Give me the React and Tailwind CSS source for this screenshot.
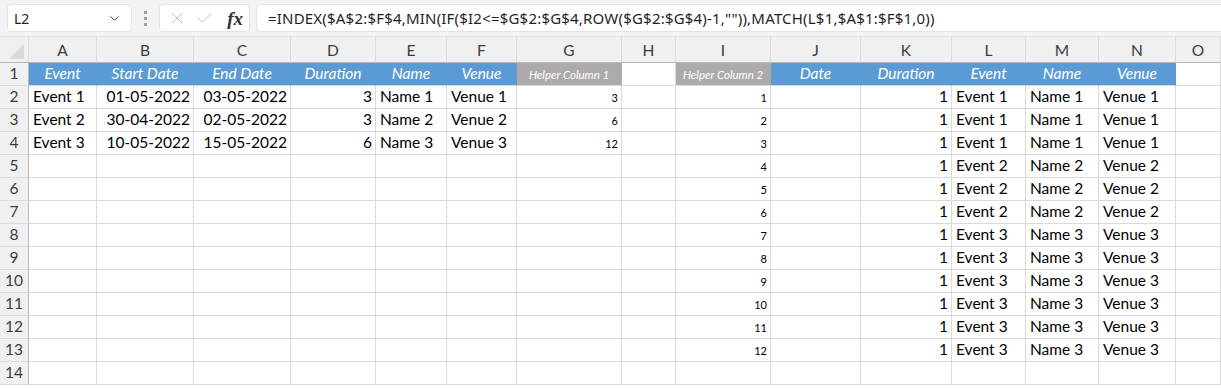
import { ChevronDown, X, Check } from "lucide-react";

const COLS = ["A", "B", "C", "D", "E", "F", "G", "H", "I", "J", "K", "L", "M", "N", "O"];
const GRID = "grid grid-cols-[29px_68px_97px_97px_85px_71px_70px_105px_54px_95px_90px_91px_74px_73px_77px_1fr]";

const events = [
  ["Event 1", "01-05-2022", "03-05-2022", "3", "Name 1", "Venue 1", "3"],
  ["Event 2", "30-04-2022", "02-05-2022", "3", "Name 2", "Venue 2", "6"],
  ["Event 3", "10-05-2022", "15-05-2022", "6", "Name 3", "Venue 3", "12"],
];

// helper column 2 -> expanded rows
const expanded = [1, 2, 3, 4, 5, 6, 7, 8, 9, 10, 11, 12].map((n) => {
  const e = n <= 3 ? 0 : n <= 6 ? 1 : 2;
  return [String(n), "", "1", events[e][0], events[e][4], events[e][5]];
});

function Cell({ children, align = "left", small, className = "" }) {
  return (
    <div
      className={
        "h-[23px] border-r border-b border-[#dadada] flex items-center overflow-hidden whitespace-nowrap " +
        (align === "right" ? "justify-end pr-[3px] " : "pl-[4px] ") +
        (small ? "text-[11px] pt-[3px] " : "text-[15.5px] ") +
        className
      }
    >
      {children}
    </div>
  );
}

function HeadCell({ children, gray, small }) {
  return (
    <div
      className={
        "h-[23px] border-b border-[#dadada] flex items-center justify-center italic text-white whitespace-nowrap " +
        (gray ? "bg-[#aeaaaa] border-r border-r-[#aeaaaa] " : "bg-[#5b9bd5] border-r border-r-[#5b9bd5] ") +
        (small ? "text-[11.5px] pt-[2px]" : "text-[15.5px]")
      }
    >
      {children}
    </div>
  );
}

function RowNum({ n }) {
  return (
    <div className="h-[23px] bg-[#f0f0f0] border-r border-r-[#b8b8b8] border-b border-[#dcdcdc] flex items-center justify-center text-[15.5px] text-[#3c3c3c]">
      {n}
    </div>
  );
}

export default function App() {
  const rows = [];
  for (let r = 2; r <= 14; r++) {
    const ev = events[r - 2];
    const ex = expanded[r - 2];
    rows.push(
      <div key={r} className={GRID}>
        <RowNum n={r} />
        <Cell>{ev ? ev[0] : ""}</Cell>
        <Cell align="right">{ev ? ev[1] : ""}</Cell>
        <Cell align="right">{ev ? ev[2] : ""}</Cell>
        <Cell align="right">{ev ? ev[3] : ""}</Cell>
        <Cell>{ev ? ev[4] : ""}</Cell>
        <Cell>{ev ? ev[5] : ""}</Cell>
        <Cell align="right" small>{ev ? ev[6] : ""}</Cell>
        <Cell />
        <Cell align="right" small>{ex ? ex[0] : ""}</Cell>
        <Cell />
        <Cell align="right">{ex ? ex[2] : ""}</Cell>
        <Cell>{ex ? ex[3] : ""}</Cell>
        <Cell>{ex ? ex[4] : ""}</Cell>
        <Cell>{ex ? ex[5] : ""}</Cell>
        <Cell />
      </div>
    );
  }

  return (
    <div className="w-[1221px] h-[388px] overflow-hidden bg-white font-['Lato',sans-serif] text-black">
      {/* formula bar */}
      <div className="h-[37px] bg-[#f3f3f3] border-b border-[#e2e2e2] flex items-start pt-[4px] pl-[7px] font-['Noto_Sans',sans-serif]">
        <div className="w-[125px] h-[28px] bg-white rounded-[4px] border border-[#e3e3e3] flex items-center justify-between pl-[6px] pr-[9px] text-[14px] text-[#1f1f1f]">
          <span>L2</span>
          <ChevronDown size={15} strokeWidth={1.6} className="text-[#444]" />
        </div>
        <div className="w-[27px] h-[28px] flex flex-col items-center justify-center gap-[3px]">
          <span className="w-[3px] h-[3px] bg-[#a0a0a0]" />
          <span className="w-[3px] h-[3px] bg-[#a0a0a0]" />
          <span className="w-[3px] h-[3px] bg-[#a0a0a0]" />
        </div>
        <div className="w-[91px] h-[28px] bg-white rounded-[4px] border border-[#e3e3e3] flex items-center pl-[7px] pr-[6px]">
          <X size={20} strokeWidth={1} className="text-[#b8b8b8]" />
          <Check size={20} strokeWidth={1} className="text-[#b8b8b8] ml-[8px]" />
          <span className="ml-auto italic text-[19px] font-['Liberation_Serif',serif] font-bold text-[#333] leading-none">fx</span>
        </div>
        <div className="ml-[6px] flex-1 h-[28px] bg-white rounded-l-[4px] border border-r-0 border-[#e3e3e3] flex items-center pl-[11px] text-[15px] tracking-[0.2px] text-[#1f1f1f] whitespace-nowrap">
          =INDEX($A$2:$F$4,MIN(IF($I2&lt;=$G$2:$G$4,ROW($G$2:$G$4)-1,"")),MATCH(L$1,$A$1:$F$1,0))
        </div>
      </div>

      {/* column letters */}
      <div className={GRID + " bg-[#f0f0f0]"}>
        <div className="h-[26px] border-r border-[#dcdcdc] border-b border-b-[#b8b8b8] relative">
          <div className="absolute right-[4px] bottom-[3px] w-0 h-0 border-l-[15px] border-l-transparent border-b-[15px] border-b-[#dadada]" />
        </div>
        {COLS.map((c) => (
          <div
            key={c}
            className="h-[26px] border-r border-[#dcdcdc] border-b border-b-[#b8b8b8] flex items-center justify-center pt-[2px] text-[15.5px] text-[#3c3c3c]"
          >
            {c}
          </div>
        ))}
      </div>

      {/* row 1 headers */}
      <div className={GRID}>
        <RowNum n={1} />
        <HeadCell>Event</HeadCell>
        <HeadCell>Start Date</HeadCell>
        <HeadCell>End Date</HeadCell>
        <HeadCell>Duration</HeadCell>
        <HeadCell>Name</HeadCell>
        <HeadCell>Venue</HeadCell>
        <HeadCell gray small>Helper Column 1</HeadCell>
        <Cell />
        <HeadCell gray small>Helper Column 2</HeadCell>
        <HeadCell>Date</HeadCell>
        <HeadCell>Duration</HeadCell>
        <HeadCell>Event</HeadCell>
        <HeadCell>Name</HeadCell>
        <HeadCell>Venue</HeadCell>
        <Cell />
      </div>

      {rows}
    </div>
  );
}
